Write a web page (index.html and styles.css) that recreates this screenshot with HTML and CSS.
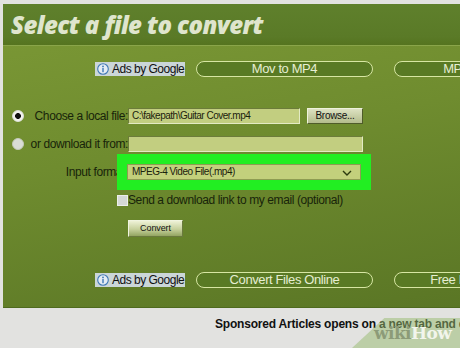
FILE: index.html
```html
<!DOCTYPE html>
<html lang="en">
<head>
  <meta charset="UTF-8" />
  <meta name="viewport" content="width=device-width, initial-scale=1.0" />
  <title>Select a file to convert</title>
  <link rel="stylesheet" href="styles.css">
</head>
<body>
  <div class="panel">
    <div class="panel-header">
      <h1>Select a file to convert</h1>
    </div>

    <div class="ad-row ad-row-top">
      <span class="ads-label">
        <svg width="12" height="12" viewBox="0 0 12 12"><circle cx="6" cy="6" r="5.3" fill="#e4ecf4" stroke="#3f78b5" stroke-width="1.1"/><circle cx="6" cy="3.4" r="0.9" fill="#3f78b5"/><rect x="5.3" y="5" width="1.4" height="4.2" fill="#3f78b5"/></svg>
        Ads by Google
      </span>
      <span class="ad-pill">Mov to MP4</span>
      <span class="ad-pill">MP4 to MPEG</span>
    </div>

    <form class="convert-form">
      <div class="label-cell">
        <span class="radio checked"></span>
        <span>Choose a local file:</span>
      </div>
      <div class="field-cell">
        <span class="text-input file-input">C:\fakepath\Guitar Cover.mp4</span>
        <span class="browse-btn">Browse...</span>
      </div>

      <div class="label-cell">
        <span class="radio"></span>
        <span>or download it from:</span>
      </div>
      <div class="field-cell">
        <span class="text-input url-input"></span>
      </div>

      <div class="label-cell label-right">
        <span>Input format:</span>
      </div>
      <div class="field-cell">
        <span class="select-box">
          MPEG-4 Video File(.mp4)
          <svg class="chevron" width="10" height="6" viewBox="0 0 10 6"><polyline points="1,1 5,5 9,1" fill="none" stroke="#2c3a0e" stroke-width="1.4"/></svg>
        </span>
      </div>

      <div class="label-cell label-right check-row">
        <span class="checkbox"></span>
      </div>
      <div class="field-cell check-row">
        <span>Send a download link to my email (optional)</span>
      </div>

      <div class="label-cell button-row"></div>
      <div class="field-cell button-row">
        <span class="convert-btn">Convert</span>
      </div>
    </form>

    <div class="ad-row ad-row-bottom">
      <span class="ads-label">
        <svg width="12" height="12" viewBox="0 0 12 12"><circle cx="6" cy="6" r="5.3" fill="#e4ecf4" stroke="#3f78b5" stroke-width="1.1"/><circle cx="6" cy="3.4" r="0.9" fill="#3f78b5"/><rect x="5.3" y="5" width="1.4" height="4.2" fill="#3f78b5"/></svg>
        Ads by Google
      </span>
      <span class="ad-pill">Convert Files Online</span>
      <span class="ad-pill">Free File Converter</span>
    </div>
  </div>

  <p class="sponsored">Sponsored Articles opens on a new tab and does not leave this page</p>

  <div class="watermark"><span class="wiki">wiki</span><span class="how">How</span></div>
</body>
</html>
```

FILE: styles.css
```css
* {
  box-sizing: border-box;
  margin: 0;
  padding: 0;
}

body {
  width: 460px;
  height: 348px;
  overflow: hidden;
  background: #e2e2e0;
  font-family: 'Liberation Sans', Arial, sans-serif;
  position: relative;
}

.panel {
  margin: 4px 0 0 3px;
  width: 457px;
  height: 304px;
  overflow: hidden;
  background: linear-gradient(170deg, #7c9936 0%, #6f8c2f 45%, #5a7625 100%);
  border-bottom: 1px solid #4e6a1e;
}

.panel-header {
  height: 42px;
  background: linear-gradient(to bottom, #5f802c, #5a7a27 80%, #55741f);
  border-bottom: 1px solid #8aa54a;
  padding: 6px 0 0 8px;
}

.panel-header h1 {
  font-family: 'Open Sans', 'DejaVu Sans', sans-serif;
  font-style: italic;
  font-weight: 800;
  font-size: 24px;
  line-height: 30px;
  letter-spacing: -0.6px;
  color: #dfe5cd;
}

.ad-row {
  display: flex;
  align-items: center;
  height: 16px;
  padding-left: 92px;
  gap: 11px;
}

.ad-row-top {
  margin-top: 15px;
}

.ad-row-bottom {
  margin-top: 35px;
}

.ads-label {
  flex: none;
  display: flex;
  align-items: center;
  gap: 3px;
  height: 14px;
  width: 90px;
  padding-left: 2px;
  background: #cbd6d8;
  color: #111;
  font-size: 12px;
  letter-spacing: -0.5px;
  white-space: nowrap;
}

.ad-pill {
  flex: none;
  width: 177px;
  height: 16px;
  border: 1px solid #d7e6a3;
  border-radius: 8px;
  background: #597a24;
  color: #e6eed2;
  font-size: 13px;
  letter-spacing: -0.4px;
  line-height: 14px;
  text-align: center;
  white-space: nowrap;
}

.ad-pill + .ad-pill {
  margin-left: 10px;
}

.convert-form {
  display: grid;
  grid-template-columns: 125px 1fr;
  row-gap: 12px;
  margin-top: 31px;
  font-size: 12px;
  letter-spacing: -0.4px;
  color: #18240a;
}

.label-cell {
  display: flex;
  align-items: center;
  justify-content: space-between;
  padding-left: 9px;
  height: 16px;
}

.label-right {
  justify-content: flex-end;
}

.field-cell {
  display: flex;
  align-items: center;
  height: 16px;
  gap: 7px;
}

.radio {
  width: 12px;
  height: 12px;
  border-radius: 50%;
  background: #d9ddd6;
  border: 1px solid #c4cabb;
}

.radio.checked {
  background: radial-gradient(circle, #111 0 2.6px, #f2f2ee 3.2px);
  border-color: #dfe3da;
}

.text-input {
  height: 16px;
  background: #c2ce80;
  border: 1px solid #e3eac4;
  border-top-color: #6c7c3a;
  border-left-color: #6c7c3a;
  font-size: 10px;
  letter-spacing: -0.5px;
  line-height: 14px;
  padding-left: 3px;
  color: #1b220c;
}

.file-input {
  width: 172px;
}

.url-input {
  width: 235px;
}

.browse-btn {
  width: 56px;
  height: 16px;
  background: linear-gradient(to bottom, #dde2c2, #b3bc8c);
  border: 1px solid #eef2dc;
  border-right-color: #4f5c2a;
  border-bottom-color: #4f5c2a;
  font-size: 10px;
  letter-spacing: -0.3px;
  line-height: 14px;
  text-align: center;
  color: #111;
}

.select-box {
  position: relative;
  width: 234px;
  height: 16px;
  margin-left: -1px;
  background: #c3d07c;
  border: 1px solid #8e9c52;
  outline: 10px solid #22ee22;
  font-size: 10px;
  letter-spacing: -0.5px;
  line-height: 14px;
  padding-left: 4px;
  color: #1b220c;
}

.chevron {
  position: absolute;
  right: 8px;
  top: 5px;
}

.check-row {
  margin-top: 2px;
  height: 12px;
}

.checkbox {
  width: 11px;
  height: 11px;
  background: #d5d9d6;
  border: 1px solid #eceeea;
}

.button-row {
  margin-top: 2px;
  height: 17px;
}

.convert-btn {
  width: 55px;
  height: 17px;
  background: linear-gradient(to bottom, #eef2d6, #c6d09c 55%, #93a562);
  border: 1px solid #f0f4e0;
  border-right-color: #6a7a3e;
  border-bottom-color: #6a7a3e;
  font-size: 9px;
  letter-spacing: -0.1px;
  line-height: 15px;
  text-align: center;
  color: #111;
}

.sponsored {
  margin: 9px 0 0 215px;
  font-size: 12px;
  font-weight: bold;
  letter-spacing: -0.2px;
  white-space: nowrap;
  color: #111;
}

.watermark {
  position: absolute;
  right: 0;
  bottom: 0;
  width: 108px;
  height: 30px;
  padding: 5px 0 0 22px;
  background: rgba(150, 185, 110, 0.5);
  clip-path: polygon(30% 0, 100% 0, 100% 100%, 0 100%);
  font-family: 'DejaVu Serif', 'Liberation Serif', serif;
  font-weight: bold;
  font-size: 17px;
  line-height: 20px;
  letter-spacing: -0.6px;
}

.watermark .wiki {
  color: #8c9b78;
}

.watermark .how {
  color: #f2f5ec;
}
```
